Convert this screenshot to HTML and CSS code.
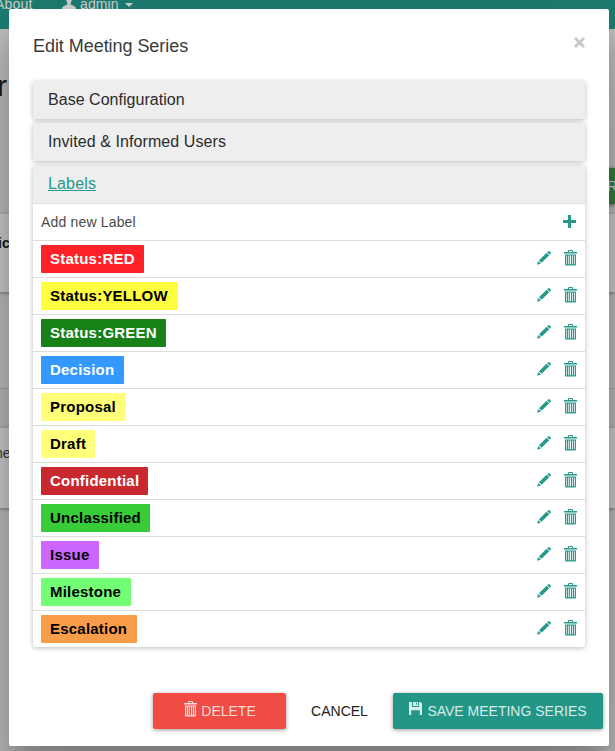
FILE: index.html
```
<!DOCTYPE html>
<html lang="en">
<head>
<meta charset="utf-8">
<title>Edit Meeting Series</title>
<link rel="stylesheet" href="styles.css">
</head>
<body>
<svg class="defs" width="0" height="0" aria-hidden="true">
  <symbol id="pencil" viewBox="0 0 14 14"><path d="M10.2 1.2 11.3.3Q12 -.2 12.7.4L13.7 1.4Q14.2 2 13.7 2.7L12.8 3.7ZM9.6 1.8 12.2 4.3 4.6 11.8 2 9.3ZM1.4 9.9 4 12.4 0 13.8Z"/></symbol>
  <symbol id="trash" viewBox="0 0 13 16"><path fill-rule="evenodd" d="M4 2V1Q4 0 5 0H8Q9 0 9 1V2H13V3.6H0V2ZM5 2H8V1H5ZM1 4.4H12V14.5Q12 15.5 11 15.5H2Q1 15.5 1 14.5ZM2.3 5.5V14.2H3V5.5ZM4.3 5.5V14.2H5.2V5.5ZM6.1 5.5V14.2H7V5.5ZM8 5.5V14.2H8.8V5.5ZM10 5.5V14.2H10.8V5.5Z"/></symbol>
</svg>
<div class="page">
  <nav class="navbar"><span class="about">About</span>
    <svg class="user" viewBox="0 0 14 14"><path d="M4 3Q4 0 7 0T10 3Q10 6 8.7 8V9.5L13 11.5Q14 12 14 14H0Q0 12 1 11.5L5.3 9.5V8Q4 6 4 3Z"/></svg>
    <span class="admin">admin</span><i class="caret"></i></nav>
  <div class="hero"><span class="hero-text">r</span><span class="add">R</span></div>
  <div class="card card-one"><b>ic</b></div>
  <div class="between"></div>
  <div class="strip"></div>
  <div class="card card-two"><span>ne</span></div>
</div>
<div class="backdrop">
<main class="modal">
  <header><h1>Edit Meeting Series</h1><svg class="close" viewBox="0 0 11 11"><path d="M1 1 10 10M10 1 1 10"/></svg></header>
  <div class="panels">
    <section class="panel"><h2><span class="t-base">Base Configuration</span></h2></section>
    <section class="panel"><h2><span class="t-inv">Invited &amp; Informed Users</span></h2></section>
    <section class="panel open"><h2><a class="t-lab">Labels</a></h2>
      <ul>
        <li><span class="new">Add new Label</span><svg class="plus" viewBox="0 0 13 13"><path d="M5 0H8V5H13V8H8V13H5V8H0V5H5Z"/></svg></li>
        <li><span class="label red">Status:RED</span><svg class="pencil"><use href="#pencil"/></svg><svg class="trash"><use href="#trash"/></svg></li>
        <li><span class="label yellow">Status:YELLOW</span><svg class="pencil"><use href="#pencil"/></svg><svg class="trash"><use href="#trash"/></svg></li>
        <li><span class="label green">Status:GREEN</span><svg class="pencil"><use href="#pencil"/></svg><svg class="trash"><use href="#trash"/></svg></li>
        <li><span class="label decision">Decision</span><svg class="pencil"><use href="#pencil"/></svg><svg class="trash"><use href="#trash"/></svg></li>
        <li><span class="label proposal">Proposal</span><svg class="pencil"><use href="#pencil"/></svg><svg class="trash"><use href="#trash"/></svg></li>
        <li><span class="label draft">Draft</span><svg class="pencil"><use href="#pencil"/></svg><svg class="trash"><use href="#trash"/></svg></li>
        <li><span class="label confidential">Confidential</span><svg class="pencil"><use href="#pencil"/></svg><svg class="trash"><use href="#trash"/></svg></li>
        <li><span class="label unclassified">Unclassified</span><svg class="pencil"><use href="#pencil"/></svg><svg class="trash"><use href="#trash"/></svg></li>
        <li><span class="label issue">Issue</span><svg class="pencil"><use href="#pencil"/></svg><svg class="trash"><use href="#trash"/></svg></li>
        <li><span class="label milestone">Milestone</span><svg class="pencil"><use href="#pencil"/></svg><svg class="trash"><use href="#trash"/></svg></li>
        <li><span class="label escalation">Escalation</span><svg class="pencil"><use href="#pencil"/></svg><svg class="trash"><use href="#trash"/></svg></li>
      </ul>
    </section>
  </div>
  <footer>
    <button class="delete"><svg class="trash"><use href="#trash"/></svg><span>DELETE</span></button>
    <button class="cancel"><span>CANCEL</span></button>
    <button class="save"><svg class="disk" viewBox="0 0 13 13"><path fill-rule="evenodd" d="M0 0H3V5H10V0H11.5L13 1.5V13H10.8V8.3H2.2V13H0ZM4 0H9.2V4H4ZM7 .8V2.6H8V.8Z"/></svg><span>SAVE MEETING SERIES</span></button>
  </footer>
</main>
</div>
</body>
</html>
```
FILE: styles.css
```
* { box-sizing: border-box; }
body { margin: 0; height: 751px; overflow: hidden; font-family: "Liberation Sans", Arial, sans-serif; color: #212121; }
.defs { position: absolute; }
svg { flex: none; fill: currentColor; }

.page { height: 751px; background: #eee; overflow: hidden; }
.navbar { height: 29px; background: #239a8c; color: #fff; display: flex; align-items: flex-start; font-size: 14px; line-height: 16px; }
.navbar .about { margin: -4px 0 0 -5px; width: 67px; letter-spacing: .2px; }
.navbar .user { width: 14px; height: 14px; margin-top: -5px; }
.navbar .admin { margin: -4px 0 0 4px; letter-spacing: .1px; }
.caret { margin: 3px 0 0 6px; border: 4px solid transparent; border-top-color: #fff; border-bottom: 0; }
.hero { height: 185px; display: flex; justify-content: space-between; }
.hero-text { font-size: 30px; margin: 40px 0 0 -3px; line-height: 34px; }
.add { margin-top: 139px; width: 8px; height: 36px; background: #43a047; color: #fff; font-size: 14px; line-height: 36px; box-shadow: 0 1px 4px rgba(0,0,0,.6); }
.card { background: #fff; box-shadow: 0 1px 4px rgba(0,0,0,.4); }
.card-one { height: 78px; padding-top: 21px; font-size: 14px; line-height: 16px; }
.between { height: 96px; }
.strip { height: 40px; background: #e8e8e8; border-top: 1px solid #ccc; }
.card-two { height: 80px; padding-top: 17px; font-size: 14px; line-height: 16px; color: #444; }
.card b, .card-two span { display: block; margin-left: -2px; }
.card-two span { margin-left: -5px; }

.backdrop { position: absolute; inset: 0; padding: 9px 6px 5px 9px; background: rgba(0,0,0,.2); overflow: hidden; }
.modal { height: 737px; width: 600px; padding: 0 24px; background: #fff; border-radius: 2px; box-shadow: 0 27px 24px rgba(0,0,0,.2), 0 40px 77px rgba(0,0,0,.22); }
header { height: 72px; display: flex; justify-content: space-between; }
h1 { margin: 26px 0 0; font-size: 18px; line-height: 22px; font-weight: 400; letter-spacing: -.05px; color: #3a3a3a; }
.close { width: 11px; height: 11px; margin: 28px .5px 0 0; stroke: #c8c8c8; stroke-width: 2.9; }
.panels { display: flex; flex-direction: column; gap: 4.6px; }
.panel { background: #fff; border-radius: 2px; box-shadow: 0 1px 6px rgba(0,0,0,.12), 0 1px 4px rgba(0,0,0,.16); }
h2 { margin: 0; height: 37.8px; padding: 10px 15px; background: #eee; border-radius: 2px 2px 0 0; font-size: 16px; line-height: 18px; font-weight: 400; color: #2b2b2b; }
.t-base { letter-spacing: .03px; }
.t-inv { letter-spacing: .08px; }
.t-lab { color: #26998a; text-decoration: underline; letter-spacing: .15px; }
.open h2 { height: 37px; padding-top: 9px; }
ul { list-style: none; margin: 0; padding: 0; }
li { height: 37px; border-top: 1px solid #ddd; padding: 0 8px; display: flex; align-items: center; color: #26998a; }
.new { color: #4a4a4a; font-size: 14px; margin-right: auto; letter-spacing: .17px; }
.plus { width: 13px; height: 13px; margin-right: 1px; }
.label { margin-right: auto; height: 28px; line-height: 28px; padding: 0 0 0 9px; font-size: 15px; letter-spacing: .22px; font-weight: 700; border-radius: 1px; color: #000; font-kerning: none; white-space: nowrap; }
.pencil { width: 14px; height: 14px; margin: -2px 13px 0 0; }
.trash { width: 13px; height: 16px; }
li .trash { margin-top: -2px; }
.red { width: 103px; background: #ff2128; color: #fff; }
.yellow { width: 137px; background: #ffff42; }
.green { width: 125px; background: #178017; color: #fff; }
.decision { width: 83px; background: #3399ff; color: #fff; }
.proposal { width: 84px; background: #ffff7a; }
.draft { width: 54px; background: #ffff7a; }
.confidential { width: 107px; background: #c9292e; color: #fff; }
.unclassified { width: 109px; background: #38cc38; }
.issue { width: 58px; background: #cc66ff; }
.milestone { width: 90px; background: #73ff73; }
.escalation { width: 96px; background: #fa9d48; }
footer { display: flex; justify-content: flex-end; margin: 46px -18px 0 0; }
button { height: 36px; padding: 0; border: 0; border-radius: 2px; font: 14px/16px "Liberation Sans", Arial, sans-serif; display: flex; align-items: center; justify-content: center; background: none; color: #212121; }
.delete, .save { box-shadow: 0 1px 4px rgba(0,0,0,.4); }
.delete { width: 133px; background: #f04c44; color: #fbdad8; }
.delete .trash { margin: -3px 4px 0 1px; }
.cancel { width: 107px; }
.save { width: 210px; background: #239688; color: #d5ece9; }
.disk { width: 13px; height: 13px; margin: -4px 5px 0 0; }
```
